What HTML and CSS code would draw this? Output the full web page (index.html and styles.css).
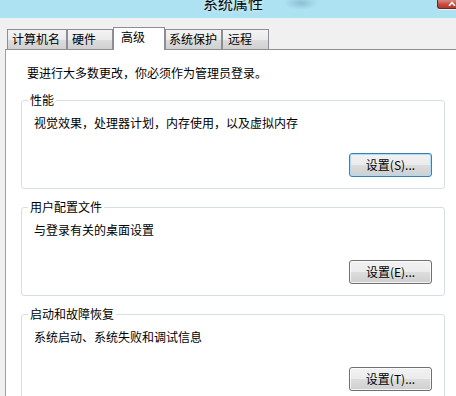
FILE: index.html
```html
<!DOCTYPE html>
<html lang="zh-CN">
<head>
<meta charset="utf-8">
<title>系统属性</title>
<link rel="stylesheet" href="styles.css">
</head>
<body>
<div class="window">
  <div class="titlebar">
    <span class="title">系统属性</span>
    <span class="close"><svg width="8" height="6" viewBox="0 0 8 6"><path d="M1 6 L4 2.5 L7 6" fill="none" stroke="#fff" stroke-width="1.6"/></svg></span>
  </div>
  <div class="tabs">
    <div class="tab w1">计算机名</div>
    <div class="tab w2">硬件</div>
    <div class="tab active">高级</div>
    <div class="tab w4">系统保护</div>
    <div class="tab w5">远程</div>
  </div>
  <div class="panel">
    <p class="intro">要进行大多数更改，你必须作为管理员登录。</p>
    <fieldset class="group">
      <legend>性能</legend>
      <p class="desc">视觉效果，处理器计划，内存使用，以及虚拟内存</p>
      <div class="actions"><button class="btn focused">设置(S)...</button></div>
    </fieldset>
    <fieldset class="group">
      <legend>用户配置文件</legend>
      <p class="desc">与登录有关的桌面设置</p>
      <div class="actions"><button class="btn">设置(E)...</button></div>
    </fieldset>
    <fieldset class="group">
      <legend>启动和故障恢复</legend>
      <p class="desc">系统启动、系统失败和调试信息</p>
      <div class="actions"><button class="btn">设置(T)...</button></div>
    </fieldset>
  </div>
</div>
</body>
</html>
```
FILE: styles.css
```css
html, body {
  margin: 0;
  padding: 0;
}
body {
  background: #f0f0f0;
  font-family: "Noto Sans CJK SC", "Microsoft YaHei", sans-serif;
  font-size: 12px;
  color: #000;
}
.window {
  width: 456px;
  height: 396px;
  display: flex;
  flex-direction: column;
  overflow: hidden;
  background: #f0f0f0;
}
.titlebar {
  height: 18px;
  flex: none;
  display: flex;
  align-items: flex-start;
  background:
    radial-gradient(ellipse 17px 7px at 301px 3px, rgba(80, 125, 150, 0.35), rgba(80, 125, 150, 0)),
    #ade2f3;
}
.title {
  margin-top: -5px;
  padding-left: 203px;
  font-size: 15px;
  line-height: 15px;
  color: #0a0a0a;
  text-shadow: 0 0 4px rgba(255, 255, 255, 0.7);
}
.close {
  margin-left: auto;
  width: 19px;
  height: 9px;
  box-sizing: border-box;
  border-left: 1px solid #6f2620;
  border-bottom: 1px solid #6f2620;
  border-bottom-left-radius: 3px;
  background: linear-gradient(#d8877d, #c5473b 60%, #b83a2f);
  display: flex;
  justify-content: flex-end;
  align-items: flex-start;
  box-shadow: 0 1px 0 rgba(255, 255, 255, 0.6);
}
.close svg {
  display: block;
  margin-top: 0;
}
.tabs {
  height: 31px;
  flex: none;
  display: flex;
  align-items: flex-end;
  padding-left: 7px;
}
.tab {
  height: 20px;
  box-sizing: border-box;
  border: 1px solid #8c8e94;
  border-bottom: none;
  line-height: 18px;
  padding-left: 4px;
  background: linear-gradient(#f3f3f3, #ebebeb 50%, #dddddd 50%, #d0d0d0);
  white-space: nowrap;
}
.w1 { width: 60px; }
.w2 { width: 46px; }
.w4 { width: 57px; padding-left: 3px; }
.w5 { width: 47px; padding-left: 5px; }
.tab.active {
  width: 52px;
  height: 23px;
  margin-bottom: -1px;
  padding-left: 7px;
  background: #fff;
  position: relative;
  z-index: 1;
}
.panel {
  flex: 1;
  margin-left: 5px;
  background: #fff;
  border-left: 1px solid #a0a0a0;
  border-top: 1px solid #8c8e94;
  padding: 15px 11px 0 15px;
}
.intro {
  margin: 0 0 0 6px;
  line-height: 16px;
}
.group {
  margin: 11px 0 0 0;
  padding: 0;
  min-width: 0;
  border: 1px solid #d5dfe5;
  border-radius: 3px;
}
.group + .group {
  margin-top: 10px;
}
.group legend {
  margin-left: 6px;
  padding: 0 2px;
  line-height: 16px;
}
.desc {
  margin: 0;
  padding: 7px 12px 0 12px;
  line-height: 16px;
}
.actions {
  display: flex;
  justify-content: flex-end;
  padding: 22px 12px 11px 12px;
}
.btn {
  width: 83px;
  height: 24px;
  box-sizing: border-box;
  margin: 0;
  padding: 0;
  font-family: inherit;
  font-size: 12px;
  line-height: 20px;
  color: #000;
  border: 1px solid #707070;
  border-radius: 3px;
  background: linear-gradient(#f2f2f2, #ebebeb 50%, #dddddd 50%, #cfcfcf);
  box-shadow: inset 0 0 0 1px rgba(255, 255, 255, 0.75);
}
.btn.focused {
  border-color: #3c7fb1;
  box-shadow: inset 0 0 0 1px #a9dcf6;
}
```
